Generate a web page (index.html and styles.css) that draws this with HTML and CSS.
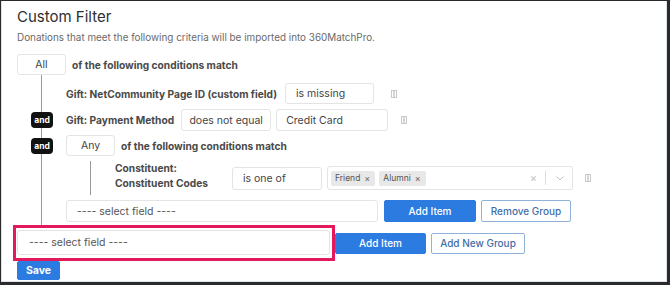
FILE: index.html
```
<!DOCTYPE html>
<html>
<head>
<meta charset="utf-8">
<link rel="stylesheet" href="styles.css">
</head>
<body>
<div class="frame">
  <div class="panel">
    <h1 class="title">Custom Filter</h1>
    <p class="subtitle">Donations that meet the following criteria will be imported into 360MatchPro.</p>

    <div class="group">
      <div class="group-head">
        <div class="box box-match">All</div>
        <span class="label">of the following conditions match</span>
      </div>
      <div class="group-body">
        <div class="cond cond-1">
          <span class="label">Gift: NetCommunity Page ID (custom field)</span>
          <div class="box box-missing">is missing</div>
          <svg class="trash" width="6" height="8" viewBox="0 0 6 8"><rect x="0.5" y="0.5" width="5" height="7" fill="none" stroke="#c9c9c9"/><line x1="2.5" y1="1" x2="2.5" y2="7" stroke="#d6d6d6"/><line x1="3.5" y1="1" x2="3.5" y2="7" stroke="#d6d6d6"/></svg>
        </div>
        <div class="cond cond-2">
          <span class="badge">and</span>
          <span class="label">Gift: Payment Method</span>
          <div class="box box-op">does not equal</div>
          <div class="box box-value">Credit Card</div>
          <svg class="trash" width="6" height="8" viewBox="0 0 6 8"><rect x="0.5" y="0.5" width="5" height="7" fill="none" stroke="#c9c9c9"/><line x1="2.5" y1="1" x2="2.5" y2="7" stroke="#d6d6d6"/><line x1="3.5" y1="1" x2="3.5" y2="7" stroke="#d6d6d6"/></svg>
        </div>
        <div class="group nested">
          <span class="badge">and</span>
          <div class="group-head">
            <div class="box box-match">Any</div>
            <span class="label">of the following conditions match</span>
          </div>
          <div class="group-body nested-body">
            <div class="cond cond-3">
              <span class="label label-stack">Constituent:<br>Constituent Codes</span>
              <div class="box box-oneof">is one of</div>
              <div class="box multi">
                <span class="tag">Friend <span class="tag-x">×</span></span>
                <span class="tag">Alumni <span class="tag-x">×</span></span>
                <span class="multi-space"></span>
                <span class="multi-clear">×</span>
                <span class="multi-sep"></span>
                <svg class="chev" width="8" height="5" viewBox="0 0 8 5"><polyline points="0.5,0.5 4,4 7.5,0.5" fill="none" stroke="#c4c4c4" stroke-width="1"/></svg>
              </div>
              <svg class="trash" width="6" height="8" viewBox="0 0 6 8"><rect x="0.5" y="0.5" width="5" height="7" fill="none" stroke="#c9c9c9"/><line x1="2.5" y1="1" x2="2.5" y2="7" stroke="#d6d6d6"/><line x1="3.5" y1="1" x2="3.5" y2="7" stroke="#d6d6d6"/></svg>
            </div>
          </div>
          <div class="group-foot nested-foot">
            <div class="box select select-nested">---- select field ----</div>
            <button class="btn btn-primary btn-add1">Add Item</button>
            <button class="btn btn-outline btn-remove">Remove Group</button>
          </div>
        </div>
      </div>
      <div class="group-foot top-foot">
        <div class="highlight">
          <div class="box select select-top">---- select field ----</div>
        </div>
        <button class="btn btn-primary btn-add2">Add Item</button>
        <button class="btn btn-outline btn-newgroup">Add New Group</button>
      </div>
    </div>

    <button class="btn btn-primary btn-save">Save</button>
  </div>
</div>
</body>
</html>
```

FILE: styles.css
```
* { box-sizing: border-box; }
html, body { margin: 0; padding: 0; background: #ffffff; }
body { font-family: Inter, "Noto Sans", "Liberation Sans", sans-serif; color: #444; }

.frame {
  width: 670px;
  height: 285px;
  border-style: solid;
  border-color: #2a2a2a;
  border-width: 1px 3px 3px 1px;
  overflow: hidden;
}

.panel {
  height: 281px;
  border: 1px solid #dde3ea;
  border-top: none;
  padding: 6px 0 0 15px;
  background: #fff;
}

.title {
  margin: 0;
  font-size: 15px;
  line-height: 20px;
  font-weight: 400;
  color: #2f2f2f;
}

.subtitle {
  margin: 3px 0 0 0;
  font-size: 9.9px;
  line-height: 14px;
  color: #6a6a6a;
}

.group { position: relative; }
.panel > .group { margin-top: 10px; }

.group-head {
  display: flex;
  align-items: center;
  gap: 6px;
}

.label {
  font-size: 10.2px;
  font-weight: 700;
  color: #4a4a4a;
  white-space: nowrap;
}

.box {
  display: flex;
  align-items: center;
  height: 21px;
  border: 1px solid #e4e4e4;
  border-radius: 3px;
  padding: 0 10px;
  font-size: 10.5px;
  color: #444;
  background: #fff;
  white-space: nowrap;
}

.box-match { width: 49px; justify-content: center; padding: 0; }

.group-body {
  margin-left: 24px;
  border-left: 1px solid #9a9a9a;
  padding: 8px 0 3px 24px;
}

.cond {
  position: relative;
  display: flex;
  align-items: center;
  gap: 7px;
}
.cond-2 { margin-top: 5px; }
.nested { margin-top: 4px; }

.badge {
  position: absolute;
  left: -35px;
  width: 22px;
  height: 16px;
  border-radius: 4px;
  background: #111;
  color: #fff;
  font-size: 8.5px;
  font-weight: 700;
  display: flex;
  align-items: center;
  justify-content: center;
}
.cond-2 .badge { top: 3px; }
.nested > .badge { top: 3px; }

.box-missing { width: 89px; margin-left: 1px; }
.box-op { width: 90px; height: 22px; justify-content: center; padding: 0; }
.box-value { width: 112px; height: 22px; margin-left: -2px; padding-left: 9px; }

.trash { flex: none; }
.cond-1 .trash { margin-left: 10px; }
.cond-2 .trash { margin-left: 6px; }

.nested-body {
  margin-top: 5px;
  padding: 0 0 0 24px;
}

.label-stack { line-height: 15px; width: 110px; margin-bottom: 4px; }
.box-oneof { width: 90px; height: 23px; margin-left: 0; }
.multi {
  width: 246px;
  height: 24px;
  margin-left: -2px;
  padding: 0 0 0 3px;
  gap: 4px;
}
.tag {
  display: inline-flex;
  align-items: center;
  height: 15px;
  padding: 0 5px 0 4px;
  background: #e8e8e8;
  border-radius: 2px;
  font-size: 8.5px;
  color: #555;
  gap: 4px;
}
.tag-x { font-size: 9px; color: #666; }
.multi-space { flex: 1; }
.multi-clear { color: #c0c0c0; font-size: 11px; margin-right: 4px; }
.multi-sep { width: 1px; height: 14px; background: #dddddd; }
.chev { margin: 0 8px 0 6px; }
.cond-3 .trash { margin-left: 5px; }

.group-foot {
  display: flex;
  align-items: center;
}
.nested-foot { margin-top: 5px; gap: 5px; }
.select { color: #555; }
.select-nested { width: 312px; height: 22px; }
.btn-add1 { width: 92px; height: 22px; margin-left: 1px; }
.btn-remove { width: 90px; height: 22px; }

.top-foot { margin-left: -4px; gap: 0; }
.highlight {
  border: 3px solid #e2195b;
  padding: 2px 2px 3px 1px;
}
.select-top { width: 313px; height: 25px; padding-left: 11px; }
.btn-add2 { width: 91px; height: 21px; }
.btn-newgroup { width: 94px; height: 21px; margin-left: 5px; }

.btn {
  font-family: Inter, "Noto Sans", "Liberation Sans", sans-serif;
  font-size: 10px;
  font-weight: 500;
  border-radius: 2px;
  padding: 0;
  display: flex;
  align-items: center;
  justify-content: center;
  cursor: pointer;
}
.btn-primary {
  background: #2c7be0;
  border: 1px solid #2c7be0;
  color: #fff;
}
.btn-outline {
  background: #fff;
  border: 1px solid #8fb2da;
  color: #3f6ea6;
}
.btn-save {
  width: 43px;
  height: 19px;
  font-size: 10.5px;
  font-weight: 700;
}
```
